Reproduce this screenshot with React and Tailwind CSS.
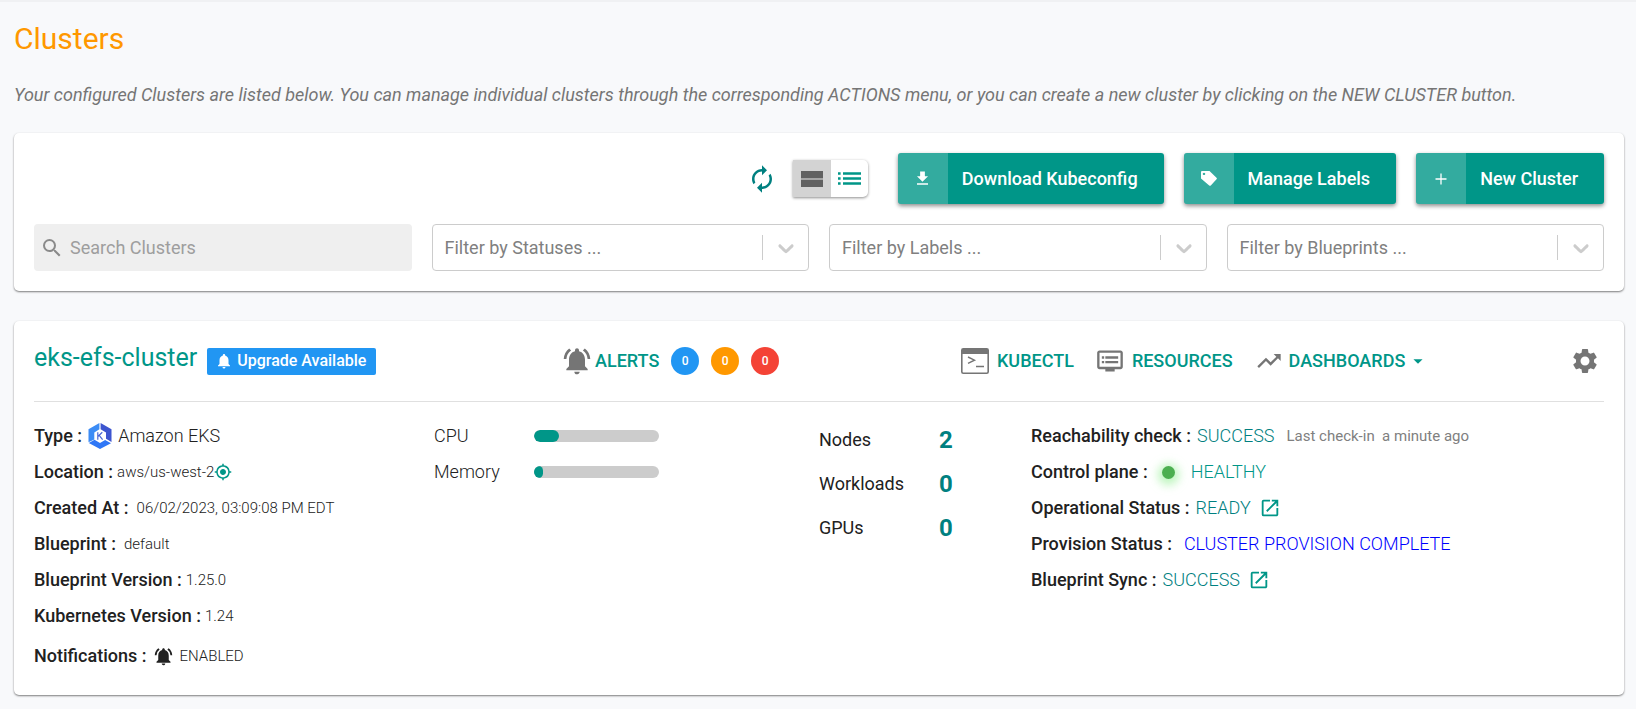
// src/pages/Clusters.jsx
import {
  MdAutorenew,
  MdFileDownload,
  MdMyLocation,
  MdNotifications,
  MdNotificationsActive,
  MdOpenInNew,
  MdSearch,
  MdSettings,
  MdArrowDropDown,
  MdDvr,
  MdTrendingUp,
} from "react-icons/md";

const FILTERS = ["Filter by Statuses ...", "Filter by Labels ...", "Filter by Blueprints ..."];

const ALERTS = [
  { level: "info", count: 0, className: "bg-[#2196f3]" },
  { level: "warning", count: 0, className: "bg-[#ff9800]" },
  { level: "critical", count: 0, className: "bg-[#f44336]" },
];

const USAGE = [
  { label: "CPU", percent: 20 },
  { label: "Memory", percent: 7 },
];

const COUNTS = [
  { label: "Nodes", value: 2 },
  { label: "Workloads", value: 0 },
  { label: "GPUs", value: 0 },
];

function StreamIcon() {
  return (
    <svg viewBox="0 0 22 16" className="w-[22px] h-4" fill="currentColor" aria-hidden="true">
      <rect width="22" height="7.400" />
      <rect y="8.600" width="22" height="7.400" />
    </svg>
  );
}

function ListIcon() {
  return (
    <svg viewBox="0 0 23 13" className="w-[23px] h-[13px]" fill="currentColor" aria-hidden="true">
      <path d="M0 .3h2.600v2.400H0zM0 5.300h2.600v2.400H0zM0 10.300h2.600v2.400H0zM5 .3h18v2.400H5zM5 5.300h18v2.400H5zM5 10.300h18v2.400H5z" />
    </svg>
  );
}

function TagIcon() {
  return (
    <svg viewBox="0 0 16 15" className="w-4 h-[15px]" fill="currentColor" aria-hidden="true">
      <path
        fillRule="evenodd"
        d="M1 0h7.500l7 6.700q.8.800 0 1.600L9.800 14.400q-.8.700-1.600 0L0 7.500V1q0-1 1-1zM3 1.700a1.200 1.200 0 1 0 .01 0z"
      />
    </svg>
  );
}

function PlusIcon() {
  return (
    <svg viewBox="0 0 12 12" className="w-3 h-3" stroke="currentColor" strokeWidth="1.300" aria-hidden="true">
      <path d="M6 .5v11M.5 6h11" />
    </svg>
  );
}

function ChevronIcon() {
  return (
    <svg viewBox="0 0 20 20" className="size-[26px]" fill="currentColor" aria-hidden="true">
      <path d="M4.516 7.548c0.436-0.446 1.043-0.481 1.576 0l3.908 3.747 3.908-3.747c0.533-0.481 1.141-0.446 1.574 0 0.436 0.445 0.408 1.197 0 1.615-0.406 0.418-4.695 4.502-4.695 4.502-0.217 0.223-0.502 0.335-0.787 0.335s-0.570-0.112-0.789-0.335c0 0-4.287-4.084-4.695-4.502s-0.436-1.170 0-1.615z" />
    </svg>
  );
}

function TerminalIcon() {
  return (
    <svg viewBox="0 0 28 26" className="w-7 h-[26px] text-[#757575]" fill="none" aria-hidden="true">
      <rect x=".8" y=".8" width="26.400" height="24.400" rx="1.500" stroke="currentColor" strokeWidth="1.600" />
      <path d="M1 1h26v5H1z" fill="currentColor" />
      <path d="M7 9l6.500 3.200L7 15.400M15 18.500h8" stroke="currentColor" strokeWidth="1.400" />
    </svg>
  );
}

function EksIcon() {
  return (
    <svg viewBox="0 0 24 26" className="w-6 h-[26px]" aria-hidden="true">
      <path d="M11.400 0v6.300L6.300 9.500v7L.5 19.300V6.300z" fill="#3c8cf5" />
      <path d="M12.600 0v6.300l5.400 3.200v6.200l5.500 3.300V6.300z" fill="#3d55cf" />
      <path d="M.8 20l5.700-3.200 5.500 3.300 5.100-3.100 5.900 3.200L12 26z" fill="#2f77f6" />
      <path d="M9.800 9.300v7.400M14.300 9.300l-4.400 4.200M11.200 12.300l3.400 4.400" stroke="#4a67d6" strokeWidth="1.200" fill="none" />
    </svg>
  );
}

function ActionButton({ icon, children }) {
  return (
    <button
      type="button"
      className="flex h-[51px] items-stretch overflow-hidden rounded-[3px] bg-[#009688] text-lg font-medium text-white shadow-[0_2px_4px_rgba(0,0,0,0.45)]"
    >
      <span className="flex w-[50px] items-center justify-center bg-white/20">{icon}</span>
      <span className="flex items-center pr-[26px] pl-[14px]">{children}</span>
    </button>
  );
}

function FilterSelect({ label }) {
  return (
    <div className="relative h-[47px]">
      <select
        aria-label={label}
        className="h-full w-full appearance-none rounded-[4px] border border-[#cccccc] bg-white px-3 text-lg text-[#808080]"
      >
        <option>{label}</option>
      </select>
      <span className="pointer-events-none absolute inset-y-0 right-0 flex items-center text-[#cccccc]">
        <span className="h-[25px] w-px bg-[#cccccc]" />
        <span className="px-[10px]">
          <ChevronIcon />
        </span>
      </span>
    </div>
  );
}

function Field({ label, children }) {
  return (
    <div className="flex h-9 items-center">
      <dt className="text-lg font-medium whitespace-pre">{label} :</dt>
      <dd className="flex items-center whitespace-pre">{children}</dd>
    </div>
  );
}

export default function Clusters() {
  return (
    <main className="min-h-screen border-t-2 border-[#f0f1f3] bg-[#f8f9fb] pr-3 pl-[14px] font-[Roboto,sans-serif] text-[#212121]">
      {/* Title */}
      <h1 className="pt-[19px] text-3xl leading-9 text-[#ff9800]">Clusters</h1>
      <p className="mt-6 text-lg leading-7 text-[#757575] italic">
        Your configured Clusters are listed below. You can manage individual clusters through the corresponding ACTIONS
        menu, or you can create a new cluster by clicking on the NEW CLUSTER button.
      </p>

      {/* Toolbar and filters */}
      <section className="mt-6 rounded-[5px] bg-white p-5 shadow-[0_1px_2px_rgba(0,0,0,0.5)]">
        <div className="flex items-center justify-end gap-5">
          <div className="mr-[10px] flex items-center gap-4">
            <button type="button" aria-label="Refresh" className="text-[#008080]">
              <MdAutorenew size={30} />
            </button>
            <div className="flex h-[37px] overflow-hidden rounded-r-[5px] bg-white shadow-[0_1px_3px_rgba(0,0,0,0.45)]">
              <button type="button" aria-label="Card view" className="flex w-[38px] items-center justify-center bg-[#d3d3d3] text-[#616161]">
                <StreamIcon />
              </button>
              <button type="button" aria-label="List view" className="flex w-[37px] items-center justify-center text-[#009688]">
                <ListIcon />
              </button>
            </div>
          </div>
          <ActionButton icon={<MdFileDownload size={19} />}>Download Kubeconfig</ActionButton>
          <ActionButton icon={<TagIcon />}>Manage Labels</ActionButton>
          <ActionButton icon={<PlusIcon />}>New Cluster</ActionButton>
        </div>
        <div className="mt-5 grid grid-cols-4 gap-5">
          <label className="flex h-[47px] items-center gap-[6px] rounded-[4px] bg-[#efefef] px-[6px]">
            <MdSearch size={24} className="text-[#8a8a8a]" />
            <input
              type="search"
              aria-label="Search Clusters"
              placeholder="Search Clusters"
              className="min-w-0 flex-1 bg-transparent text-lg outline-none placeholder:text-[#9e9e9e]"
            />
          </label>
          {FILTERS.map((label) => (
            <FilterSelect key={label} label={label} />
          ))}
        </div>
      </section>

      {/* Cluster card */}
      <section className="mt-[30px] rounded-[5px] bg-white px-5 pb-[21px] shadow-[0_1px_2px_rgba(0,0,0,0.5)]">
        <header className="grid h-[81px] grid-cols-[527fr_400fr_643fr] items-center border-b border-[#e0e0e0]">
          <div className="flex items-center gap-[10px]">
            <a href="#cluster" className="pb-[6px] text-[25px] leading-8 text-[#009688]">
              eks-efs-cluster
            </a>
            <button type="button" className="flex h-[27px] items-center gap-1 rounded-[2px] bg-[#2196f3] pr-[10px] pl-2 text-base font-medium text-white">
              <MdNotifications size={18} />
              Upgrade Available
            </button>
          </div>

          <div className="flex items-center">
            <MdNotificationsActive size={32} className="text-[#757575]" />
            <a href="#alerts" className="mr-3 ml-[2px] text-lg font-medium text-[#009688]">
              ALERTS
            </a>
            <div className="flex gap-3">
              {ALERTS.map((alert) => (
                <span
                  key={alert.level}
                  className={`flex size-7 items-center justify-center rounded-full text-xs font-medium text-white ${alert.className}`}
                >
                  {alert.count}
                </span>
              ))}
            </div>
          </div>

          <div className="flex items-center text-lg font-medium text-[#009688]">
            <a href="#kubectl" className="mr-[22px] flex items-center gap-2">
              <TerminalIcon />
              KUBECTL
            </a>
            <a href="#resources" className="mr-[22px] flex items-center gap-2">
              <MdDvr size={28} className="text-[#757575]" />
              RESOURCES
            </a>
            <button type="button" className="flex items-center">
              <MdTrendingUp size={28} className="mr-[6px] text-[#757575]" />
              DASHBOARDS
              <MdArrowDropDown size={22} className="ml-[2px]" />
            </button>
            <button type="button" aria-label="Settings" className="mr-1 ml-auto text-[#757575]">
              <MdSettings size={30} />
            </button>
          </div>
        </header>

        <div className="grid grid-cols-[400fr_385fr_212fr_573fr] items-start pt-4">
          <dl>
            <Field label="Type">
              <span className="mx-[6px]">
                <EksIcon />
              </span>
              <span className="text-lg font-light">Amazon EKS</span>
            </Field>
            <Field label="Location">
              <span className="ml-1 text-[15px] font-light">aws/us-west-2</span>
              <MdMyLocation size={18} className="text-[#009688]" />
            </Field>
            <Field label="Created At">
              <span className="ml-2 text-[15px] font-light">06/02/2023, 03:09:08 PM EDT</span>
            </Field>
            <Field label="Blueprint">
              <span className="ml-2 text-[15px] font-light">default</span>
            </Field>
            <Field label="Blueprint Version">
              <span className="ml-1 text-[15px] font-light">1.25.0</span>
            </Field>
            <Field label="Kubernetes Version">
              <span className="ml-1 text-[15px] font-light">1.24</span>
            </Field>
            <div className="pt-1">
              <Field label="Notifications">
                <MdNotificationsActive size={21} className="mx-[6px]" />
                <span className="text-[15px] font-light">ENABLED</span>
              </Field>
            </div>
          </dl>

          <div>
            {USAGE.map((item) => (
              <div key={item.label} className="flex h-9 items-center">
                <span className="w-[100px] text-lg font-light">{item.label}</span>
                <div className="h-3 w-[125px] overflow-hidden rounded-full bg-[#cccccc]">
                  <div className="h-full rounded-full bg-[#009688]" style={{ width: `${item.percent}%` }} />
                </div>
              </div>
            ))}
          </div>

          <dl>
            {COUNTS.map((item) => (
              <div key={item.label} className="flex h-11 items-center">
                <dt className="w-[120px] text-lg">{item.label}</dt>
                <dd className="text-2xl font-bold text-[#008080]">{item.value}</dd>
              </div>
            ))}
          </dl>

          <dl>
            <Field label="Reachability check">
              <span className="ml-[6px] text-lg font-light text-[#008080]">SUCCESS</span>
              <span className="ml-3 text-[15px] text-[#808080]">Last check-in  a minute ago</span>
            </Field>
            <Field label="Control plane">
              <span className="mr-4 ml-[14px] size-[13px] rounded-full bg-[#4caf50] shadow-[0_2px_10px_4px_rgba(144,238,144,0.6)]" />
              <span className="text-lg font-light text-[#009688]">HEALTHY</span>
            </Field>
            <Field label="Operational Status">
              <span className="mr-2 ml-[6px] text-lg font-light text-[#008080]">READY</span>
              <a href="#operational" aria-label="Open operational status" className="text-[#009688]">
                <MdOpenInNew size={22} />
              </a>
            </Field>
            <Field label="Provision Status">
              <span className="ml-3 text-lg font-light text-[#0000ff]">CLUSTER PROVISION COMPLETE</span>
            </Field>
            <Field label="Blueprint Sync">
              <span className="mr-2 ml-[6px] text-lg font-light text-[#008080]">SUCCESS</span>
              <a href="#blueprint-sync" aria-label="Open blueprint sync" className="text-[#009688]">
                <MdOpenInNew size={22} />
              </a>
            </Field>
          </dl>
        </div>
      </section>
    </main>
  );
}
